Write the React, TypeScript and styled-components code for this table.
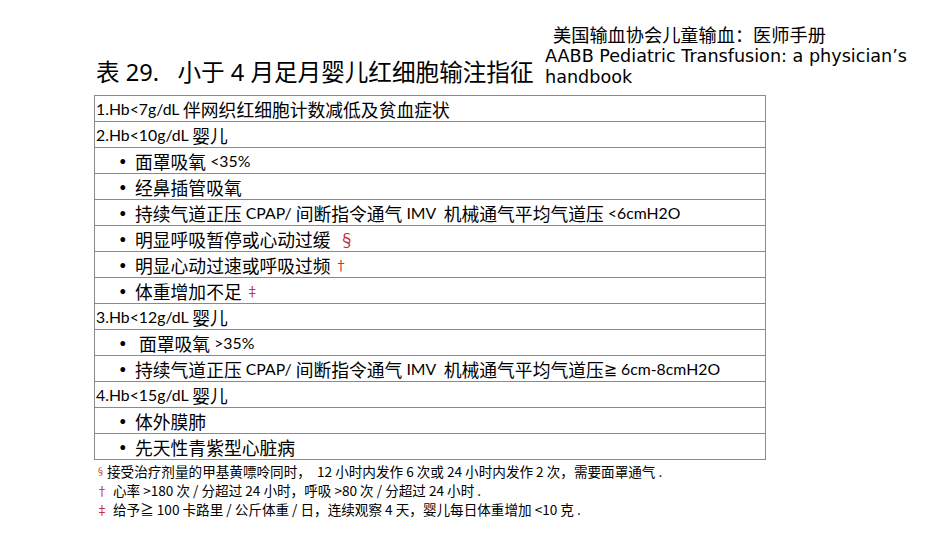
import styled, { createGlobalStyle } from "styled-components";

const GlobalStyle = createGlobalStyle`
  html, body {
    margin: 0;
    padding: 0;
    background: #ffffff;
  }
  body {
    font-family: "Noto Sans", "Noto Sans CJK SC", sans-serif;
    color: #000;
  }
`;

const Slide = styled.div`
  width: 950px;
  height: 535px;
  box-sizing: border-box;
  padding: 22px 0 0 94px;
  overflow: hidden;
`;

const Header = styled.div`
  display: flex;
  align-items: flex-end;
  height: 70px;
`;

const Title = styled.h1`
  margin: 0 0 5px 2px;
  width: 449px;
  font-family: "Noto Sans", "Noto Sans CJK SC", sans-serif;
  font-weight: 400;
  font-size: 23.6px;
  line-height: 30px;
  white-space: pre;
`;

const Source = styled.div`
  align-self: flex-start;
  margin-top: 2px;
  display: flex;
  flex-direction: column;
  font-family: "DejaVu Sans", "Noto Sans CJK SC", sans-serif;
  font-size: 17.6px;
  line-height: 21.5px;
`;

const SourceCn = styled.span`
  padding-left: 8px;
  font-family: "Noto Sans CJK SC", sans-serif;
  font-size: 18.2px;
`;

const Table = styled.div`
  margin-top: 3px;
  width: 670px;
  border: 1px solid #8a8a8a;
  border-bottom: none;
  display: flex;
  flex-direction: column;
`;

const Row = styled.div<{ $bullet?: boolean; $gap?: number }>`
  height: 25px;
  border-bottom: 1px solid #8a8a8a;
  display: flex;
  align-items: center;
  padding-left: ${(p) => (p.$bullet ? "24px" : "1px")};
  font-family: "Noto Sans CJK SC", sans-serif;
  font-size: 17.8px;
  white-space: pre;

  &::before {
    content: ${(p) => (p.$bullet ? '"•"' : "none")};
    font-family: Lato, sans-serif;
    font-size: 13px;
    width: ${(p) => 16 + (p.$gap ?? 0)}px;
  }
`;

const Latin = styled.span`
  font-family: Lato, "DejaVu Sans", "Noto Sans CJK SC", sans-serif;
  font-size: 15.8px;
`;

const Mark = styled.span<{ $size?: number }>`
  color: #c0282a;
  font-size: ${(p) => p.$size ?? 14}px;
  margin-left: 4px;
`;

const Notes = styled.div`
  margin-top: 2px;
  display: flex;
  flex-direction: column;
  font-family: "Noto Sans CJK SC", sans-serif;
  font-size: 13.6px;
`;

const Note = styled.div`
  display: flex;
  align-items: center;
  height: 19px;
  line-height: 19px;
  white-space: pre;
`;

const NoteMark = styled.span<{ $w: number; $size?: number }>`
  color: #c0282a;
  width: ${(p) => p.$w}px;
  padding-left: 2px;
  font-size: ${(p) => p.$size ?? 12}px;
`;

type RowData = {
  text: string;
  bullet?: boolean;
  gap?: number;
  mark?: string;
  markSize?: number;
};

const rows: RowData[] = [
  { text: "1.Hb<7g/dL 伴网织红细胞计数减低及贫血症状" },
  { text: "2.Hb<10g/dL 婴儿" },
  { text: "面罩吸氧 <35%", bullet: true },
  { text: "经鼻插管吸氧", bullet: true },
  { text: "持续气道正压 CPAP/ 间断指令通气 IMV  机械通气平均气道压 <6cmH2O", bullet: true },
  { text: "明显呼吸暂停或心动过缓 ", bullet: true, mark: "§", markSize: 16 },
  { text: "明显心动过速或呼吸过频", bullet: true, mark: "†", markSize: 13 },
  { text: "体重增加不足", bullet: true, mark: "‡", markSize: 13 },
  { text: "3.Hb<12g/dL 婴儿" },
  { text: "面罩吸氧 >35%", bullet: true, gap: 4 },
  { text: "持续气道正压 CPAP/ 间断指令通气 IMV  机械通气平均气道压≧ 6cm-8cmH2O", bullet: true },
  { text: "4.Hb<15g/dL 婴儿" },
  { text: "体外膜肺", bullet: true },
  { text: "先天性青紫型心脏病", bullet: true },
];

// split a cell into CJK and Latin runs so the Latin parts can be set smaller
const latinRun = /([\x20-\x7e≧]+)/;
const splitRuns = (text: string) =>
  text.split(latinRun).filter(Boolean).map((part, i) =>
    /^[\x20-\x7e≧]+$/.test(part) ? <Latin key={i}>{part}</Latin> : <span key={i}>{part}</span>
  );

export default function App() {
  return (
    <>
      <GlobalStyle />
      <Slide>
        <Header>
          <Title>{"表 29.   小于 4 月足月婴儿红细胞输注指征"}</Title>
          <Source>
            <SourceCn>美国输血协会儿童输血：医师手册</SourceCn>
            <span>AABB Pediatric Transfusion: a physician’s</span>
            <span>handbook</span>
          </Source>
        </Header>
        <Table>
          {rows.map((r, i) => (
            <Row key={i} $bullet={r.bullet} $gap={r.gap}>
              {splitRuns(r.text)}
              {r.mark && <Mark $size={r.markSize}>{r.mark}</Mark>}
            </Row>
          ))}
        </Table>
        <Notes>
          <Note>
            <NoteMark $w={11} $size={9}>§</NoteMark>
            接受治疗剂量的甲基黄嘌呤同时，  12 小时内发作 6 次或 24 小时内发作 2 次，需要面罩通气 .
          </Note>
          <Note>
            <NoteMark $w={17}>†</NoteMark>
            心率 &gt;180 次 / 分超过 24 小时，呼吸 &gt;80 次 / 分超过 24 小时 .
          </Note>
          <Note>
            <NoteMark $w={17}>‡</NoteMark>
            给予≧ 100 卡路里 / 公斤体重 / 日，连续观察 4 天，婴儿每日体重增加 &lt;10 克 .
          </Note>
        </Notes>
      </Slide>
    </>
  );
}
